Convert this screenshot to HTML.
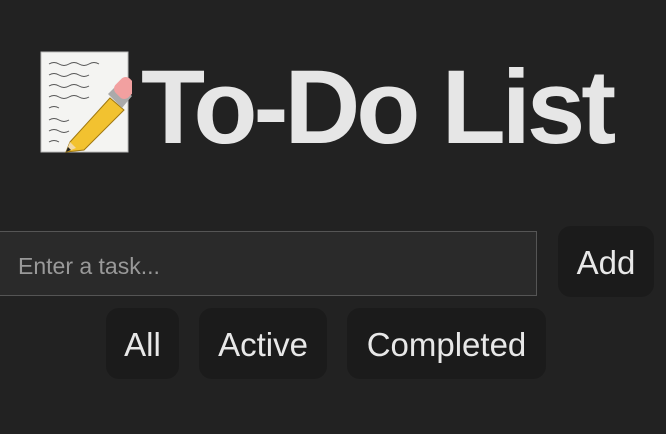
<!DOCTYPE html>
<html><head><style>
body{margin:0;width:666px;height:434px;background:#222;overflow:hidden;font-family:"Liberation Sans",sans-serif;position:relative}
.t{position:absolute;left:141px;top:48px;font-size:105px;font-weight:bold;color:#e6e6e6;letter-spacing:-4px;line-height:120px;white-space:nowrap}
.in{position:absolute;left:-10px;top:231px;width:547px;height:65px;background:#2a2a2a;border:1px solid #555;border-left:none;box-sizing:border-box}
.in span{position:absolute;left:28px;top:21px;font-size:23px;color:#999}
.b{position:absolute;background:#1b1b1b;border-radius:13px;color:#e8e8e8;font-size:33px;display:flex;align-items:center;justify-content:center;padding-top:3px;box-sizing:border-box}
</style></head><body>
<svg style="position:absolute;left:40px;top:50px" width="92" height="104" viewBox="0 0 92 104">
<rect x="1" y="2" width="87" height="100" fill="#f4f4f2" stroke="#bbb"/>
<g stroke="#555" stroke-width="1" fill="none">
<path d="M9 14q5-3 10 0t10 0t10 0t10 0t10 0M9 25q5-3 10 0t10 0t10 0t10 0M9 36q5-3 10 0t10 0t10 0t10 0M9 47q5-3 10 0t10 0t10 0t10 0M9 58q5-3 10 0M9 70q5-3 10 0t10 0M9 81q5-3 10 0t10 0M9 92q5-3 10 0"/>
</g>
<polygon points="30,92 70,48 84,60 44,100 26,102" fill="#f2c230" stroke="#a07810"/>
<polygon points="26,102 30,92 36,98" fill="#f0d9a8"/>
<polygon points="26,102 28,97 31,100" fill="#222"/>
<polygon points="68,44 78,34 92,46 82,58" fill="#aaa"/>
<rect x="76" y="28" width="18" height="20" rx="6" transform="rotate(45 85 38)" fill="#f2a0a0"/>
</svg>
<div class="t">To-Do List</div>
<div class="in"><span>Enter a task...</span></div>
<div class="b" style="left:558px;top:226px;width:96px;height:71px">Add</div>
<div class="b" style="left:106px;top:308px;width:73px;height:71px">All</div>
<div class="b" style="left:199px;top:308px;width:128px;height:71px">Active</div>
<div class="b" style="left:347px;top:308px;width:199px;height:71px">Completed</div>
</body></html>
